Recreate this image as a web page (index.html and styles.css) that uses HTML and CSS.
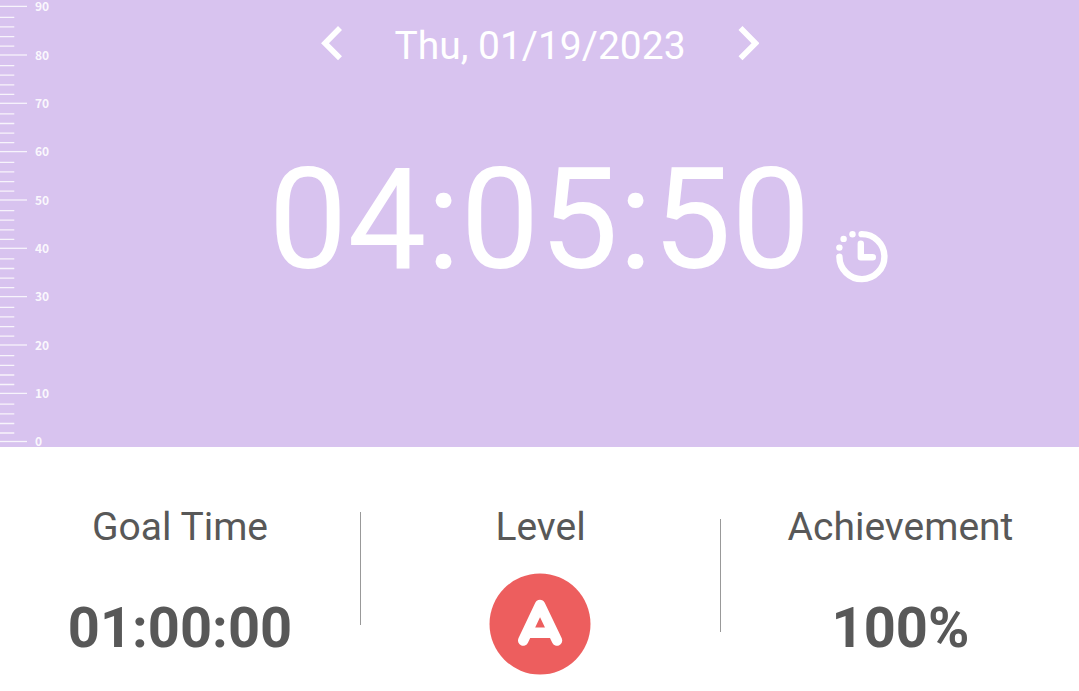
FILE: index.html
```
<!DOCTYPE html>
<html lang="en">
<head>
<meta charset="utf-8">
<title>Daily study time</title>
<link rel="stylesheet" href="styles.css">
</head>
<body>
<main class="screen">
  <section class="hero">
    <svg class="ruler" width="60" height="447" viewBox="0 0 60 447">
      <defs>
        <path id="major" d="M0 0h27"/>
        <path id="minor" d="M0 -9.9h14.3M0 -19.4h14.3M0 -29.1h14.3M0 -38.7h14.3"/>
      </defs>
      <g class="ticks">
        <use href="#major" y="441.5"/><use href="#minor" y="442.9"/>
        <use href="#major" y="393.4"/><use href="#minor" y="394.4"/>
        <use href="#major" y="345"/><use href="#minor" y="346"/>
        <use href="#major" y="296.6"/><use href="#minor" y="297.6"/>
        <use href="#major" y="248.3"/><use href="#minor" y="249.3"/>
        <use href="#major" y="200"/><use href="#minor" y="201"/>
        <use href="#major" y="151.6"/><use href="#minor" y="152.6"/>
        <use href="#major" y="103.3"/><use href="#minor" y="104.3"/>
        <use href="#major" y="55"/><use href="#minor" y="56"/>
        <use href="#major" y="6.4"/>
      </g>
      <g class="marks">
        <text x="35" y="446">0</text>
        <text x="35" y="398">10</text>
        <text x="35" y="349.5">20</text>
        <text x="35" y="301">30</text>
        <text x="35" y="253">40</text>
        <text x="35" y="204.5">50</text>
        <text x="35" y="156">60</text>
        <text x="35" y="108">70</text>
        <text x="35" y="59.5">80</text>
        <text x="35" y="11">90</text>
      </g>
    </svg>
    <div class="date-nav">
      <svg class="arrow" width="22" height="36" viewBox="0 0 22 36"><path d="M20 3 5 18.200l15 15"/></svg>
      <span class="date">Thu, 01/19/2023</span>
      <svg class="arrow" width="22" height="36" viewBox="0 0 22 36"><path d="M3.500 3 18.500 18.200 3.500 33.200"/></svg>
    </div>
    <div class="timer">
      <span class="time">04:05:50</span>
      <svg class="clock" width="54" height="54" viewBox="0 0 54 54">
        <path class="ring" d="M27.600 5.100A22.500 22.500 0 1 1 5.400 27.700"/>
        <path class="hands" d="M26.800 14.800v13.500h12"/>
        <circle cx="18.500" cy="5.200" r="3.200"/><circle cx="9.600" cy="9.900" r="3.200"/><circle cx="5.400" cy="18.600" r="3.200"/>
      </svg>
    </div>
  </section>
  <section class="stats">
    <div class="stat">
      <span class="label">Goal Time</span>
      <span class="value">01:00:00</span>
    </div>
    <div class="stat stat-level">
      <span class="label">Level</span>
      <svg class="badge" width="102" height="102" viewBox="0 0 102 102">
        <circle cx="51" cy="51" r="50.500"/>
        <path d="M34.200 67.500 51 32l17 35.500M39 59.800h24"/>
      </svg>
    </div>
    <div class="stat">
      <span class="label">Achievement</span>
      <span class="value">100%</span>
    </div>
  </section>
</main>
</body>
</html>
```
FILE: styles.css
```
body { margin: 0; background: #fff; font-family: Roboto, sans-serif; }
.screen { width: 1079px; height: 691px; overflow: hidden; display: flex; flex-direction: column; }
.hero { position: relative; height: 447px; background: #d8c3ef; color: #fff; display: flex; flex-direction: column; align-items: center; }
.ruler { position: absolute; left: 0; top: 0; overflow: visible; }
.ticks { stroke: #fff; stroke-width: 1.3; opacity: .82; }
.marks { fill: #fff; font: 700 12px "Noto Sans CJK SC", sans-serif; opacity: .88; }
.date-nav { display: flex; align-items: center; justify-content: space-between; width: 440px; height: 36px; margin-top: 25px; }
.date { font-size: 39px; line-height: 46px; padding: 6px 0 0 1px; white-space: nowrap; }
.arrow { fill: none; stroke: #fff; stroke-width: 5.6; }
.timer { display: grid; grid-template-columns: 1fr auto 1fr; width: 100%; margin-top: 74px; align-items: end; }
.time { grid-column: 2; width: 540px; font-size: 140.5px; line-height: 170px; display: flex; justify-content: center; }
.clock { grid-column: 3; margin: 0 0 22px 24px; fill: #fff; }
.ring, .hands { fill: none; stroke: #fff; stroke-width: 6.4; stroke-linecap: round; stroke-linejoin: round; }
.stats { flex: 1; display: grid; grid-template-columns: 360px 360px 1fr; color: #585858; }
.stat { position: relative; display: flex; flex-direction: column; align-items: center; padding-top: 57px; }
.stat + .stat::before { content: ""; position: absolute; left: 0; top: 65px; width: 1px; height: 113px; background: #999; }
.stat-level + .stat { padding-left: 2px; }
.stat-level + .stat::before { top: 72px; }
.label { font-size: 39px; line-height: 46px; }
.stat-level .label { padding-left: 1px; }
.value { font-size: 56px; font-weight: 700; line-height: 66px; margin-top: 45px; }
.badge { margin: 23px 0 0; fill: #ed5e5e; }
.badge path { fill: none; stroke: #fff; stroke-width: 10.500; stroke-linecap: round; stroke-linejoin: round; }
```
